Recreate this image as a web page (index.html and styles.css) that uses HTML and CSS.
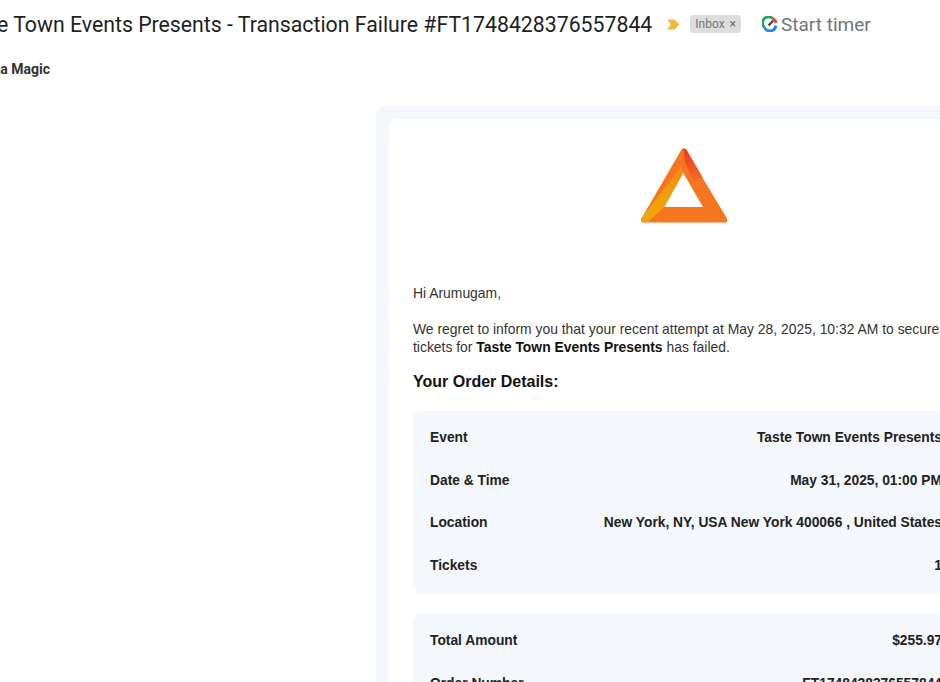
FILE: index.html
```html
<!DOCTYPE html>
<html lang="en">
<head>
    <meta charset="UTF-8">
    <title>Transaction Failure</title>
    <link rel="stylesheet" href="styles.css">
</head>
<body>
<div class="subject">
    <h1>Taste Town Events Presents - Transaction Failure #FT1748428376557844</h1>
    <svg class="marker" width="13" height="11" viewBox="0 0 13 11">
        <path d="M0 .5h7.500l5 5-5 5H0l4-5z" fill="#f4b642"/>
    </svg>
    <span class="chip">Inbox <span class="chip-x">×</span></span>
    <span class="timer">
        <svg width="16" height="16" viewBox="0 0 16 16">
            <path d="M2.300 11.300A6 6 0 0 1 10.500 2.500" fill="none" stroke="#1fa463" stroke-width="2.800"/>
            <path d="M2.300 11.300A6 6 0 0 0 13.800 9.500" fill="none" stroke="#2a84e0" stroke-width="2.800"/>
            <path d="M10.500 2.500A6 6 0 0 1 14 7" fill="none" stroke="#e8453c" stroke-width="2.800"/>
            <path d="M6.500 9.500l4.700-4.700" stroke="#444" stroke-width="2.200"/>
        </svg>
        Start timer
    </span>
</div>
<div class="sender">Data Magic</div>

<div class="mail">
    <div class="mail-inner">
        <div class="logo">
            <svg width="90" height="80" viewBox="0 0 90 80">
                <defs>
                    <linearGradient id="redEdge" x1="47" y1="4" x2="60" y2="36" gradientUnits="userSpaceOnUse">
                        <stop offset="0" stop-color="#ee3b23"/>
                        <stop offset="1" stop-color="#f5701f"/>
                    </linearGradient>
                    <linearGradient id="yellowEdge" x1="40" y1="20" x2="10" y2="70" gradientUnits="userSpaceOnUse">
                        <stop offset="0" stop-color="#f58a14"/>
                        <stop offset=".5" stop-color="#f29d0c"/>
                        <stop offset="1" stop-color="#f0a60a"/>
                    </linearGradient>
                </defs>
                <path d="M43.500 4L3.500 73H85z" fill="#f5761e" stroke="#f5761e" stroke-width="5" stroke-linejoin="round"/>
                <path d="M43.500 1.500q2.500 0 3.500 2L63 31 53 32 45 15z" fill="url(#redEdge)"/>
                <path d="M41.700 19L1.500 71q-.5 3 2 4H8.300L24.300 60 43.300 26z" fill="url(#yellowEdge)"/>
                <path d="M43.300 26L24.300 60H63z" fill="#fff"/>
            </svg>
        </div>
        <p class="greeting">Hi Arumugam,</p>
        <p class="message">We regret to inform you that your recent attempt at May 28, 2025, 10:32 AM to secure tickets for <b>Taste Town Events Presents</b> has failed.</p>
        <h2>Your Order Details:</h2>
        <div class="panel">
            <div class="row"><span>Event</span><span>Taste Town Events Presents</span></div>
            <div class="row"><span>Date &amp; Time</span><span>May 31, 2025, 01:00 PM</span></div>
            <div class="row"><span>Location</span><span>New York, NY, USA New York 400066 , United States</span></div>
            <div class="row"><span>Tickets</span><span>1</span></div>
        </div>
        <div class="panel">
            <div class="row"><span>Total Amount</span><span>$255.97</span></div>
            <div class="row"><span>Order Number</span><span>FT1748428376557844</span></div>
        </div>
    </div>
</div>
</body>
</html>
```

FILE: styles.css
```css
html, body {
  height: 100%;
  overflow: hidden;
}
body {
  margin: 0;
  background-color: #fff;
  color: #222;
  font-family: 'Liberation Sans', Arial, sans-serif;
}
.subject {
  display: flex;
  align-items: center;
  height: 48px;
  margin-left: -44px;
  white-space: nowrap;
}
h1 {
  margin: 0;
  font-family: 'Roboto', sans-serif;
  font-size: 21.270px;
  font-weight: 400;
  color: #1f1f1f;
}
.marker {
  margin-left: 15px;
}
.chip {
  margin-left: 10px;
  padding: 1px 5px;
  background-color: #ddd;
  border-radius: 4px;
  font-family: 'Roboto', sans-serif;
  font-size: 12px;
  line-height: 16px;
  color: #777;
}
.chip-x {
  margin-left: 2px;
  color: #666;
}
.timer {
  display: flex;
  align-items: center;
  gap: 3px;
  margin-left: 21px;
  font-family: 'Roboto', sans-serif;
  font-size: 19px;
  color: #70757a;
}
.sender {
  margin-top: 12px;
  margin-left: -21px;
  font-family: 'Roboto', sans-serif;
  font-size: 14px;
  font-weight: 700;
  line-height: 18px;
  color: #333;
}
.mail {
  width: 594px;
  margin: 28px 0 0 376px;
  padding: 13px;
  background-color: #f4f7fb;
  border-radius: 10px;
}
.mail-inner {
  padding: 28px 24px;
  background-color: #fff;
  border-radius: 8px;
  font-size: 13.900px;
  line-height: 18px;
}
.logo {
  display: flex;
  justify-content: center;
  height: 137px;
  padding-right: 2px;
}
.mail-inner p {
  margin: 0 0 18px;
  color: #333;
}
.mail-inner .message {
  margin-bottom: 17px;
}
.mail-inner b {
  color: #111;
}
h2 {
  margin: 0 0 20px;
  font-size: 16px;
  line-height: 18px;
  color: #111;
}
.panel {
  padding: 6px 17px 7px;
  margin-bottom: 20px;
  background-color: #f4f7fb;
  border-radius: 8px;
}
.row {
  display: flex;
  justify-content: space-between;
  padding: 12px 0;
  font-size: 13.800px;
  line-height: 18.500px;
  font-weight: 700;
  color: #222;
}
```
